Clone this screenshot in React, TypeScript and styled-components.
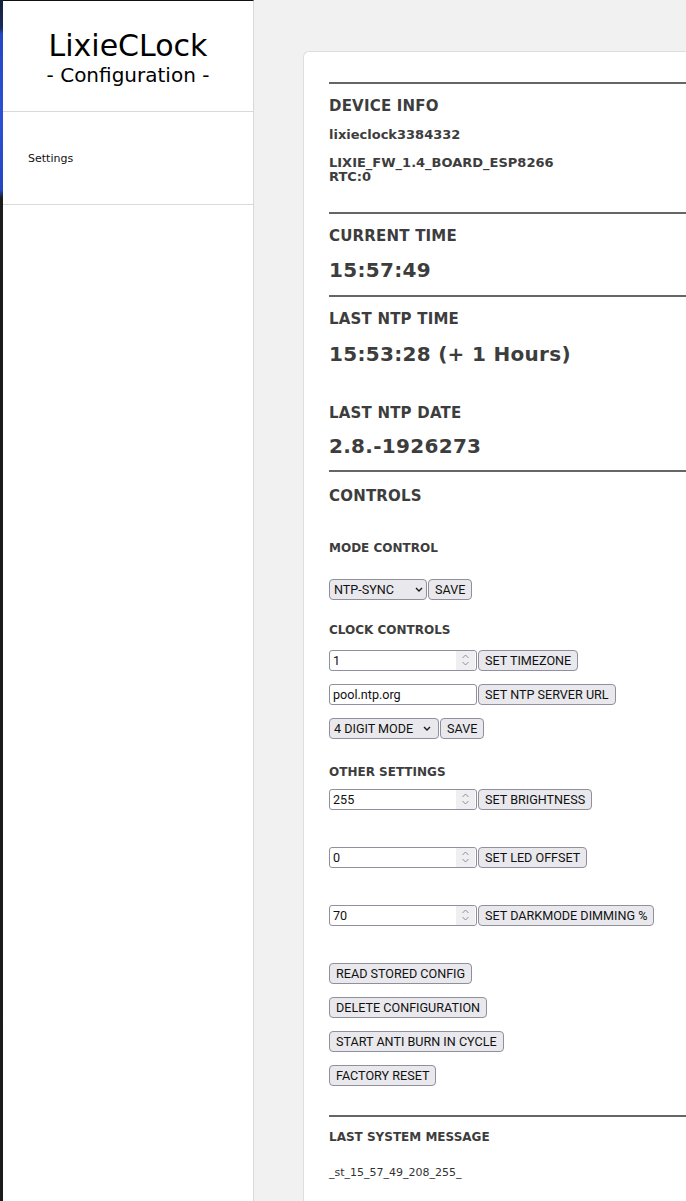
import React from "react";
import styled, { createGlobalStyle } from "styled-components";

const GlobalStyle = createGlobalStyle`
  html, body {
    margin: 0;
    padding: 0;
    overflow: hidden;
    background: #f1f1f1;
    font-family: "DejaVu Sans", Verdana, sans-serif;
  }
`;

const Page = styled.div`
  display: flex;
  min-height: 100vh;
  width: 100%;
`;

const DesktopEdge = styled.div`
  flex: 0 0 3px;
  background: linear-gradient(
    to bottom,
    #16203a 0px,
    #1a2a5c 28px,
    #2447c8 34px,
    #2b50d6 120px,
    #2546c4 190px,
    #1c1c1c 198px,
    #1b1b1b 100%
  );
`;

const Sidebar = styled.aside`
  flex: 0 0 250px;
  background: #ffffff;
  border-top: 1px solid #111;
  border-right: 1px solid #d9d9d9;
`;

const SidebarHeader = styled.header`
  padding: 28px 0 24px;
  border-bottom: 1px solid #d9d9d9;
  text-align: center;
  color: #000;
`;

const AppTitle = styled.div`
  font-size: 30px;
  line-height: 34px;
`;

const AppSubtitle = styled.div`
  font-size: 20px;
  line-height: 24px;
`;

const NavItem = styled.div`
  padding: 40px 0 39px 25px;
  border-bottom: 1px solid #d9d9d9;
  font-size: 11px;
  line-height: 13px;
  color: #111;
`;

const Main = styled.main`
  flex: 1 1 auto;
  min-width: 0;
  overflow: hidden;
  background: #f1f1f1;
  padding: 51px 0 0 49px;
`;

const Card = styled.section`
  width: 700px;
  min-height: 1200px;
  box-sizing: border-box;
  background: #ffffff;
  border: 1px solid #dedede;
  border-right: none;
  border-radius: 6px 0 0 0;
  padding: 30px 0 0 25px;
  color: #3d3d3d;
`;

const Rule = styled.hr<{ $mt?: number }>`
  margin: ${(p) => p.$mt ?? 0}px 0 0;
  border: none;
  border-top: 2px solid #666;
  height: 0;
`;

const SectionTitle = styled.h2<{ $mt: number }>`
  margin: ${(p) => p.$mt}px 0 0;
  font-size: 15px;
  line-height: 18px;
  font-weight: bold;
  letter-spacing: 0.2px;
`;

const InfoLine = styled.div<{ $mt: number }>`
  margin-top: ${(p) => p.$mt}px;
  font-size: 13px;
  line-height: 14px;
  font-weight: bold;
`;

const BigValue = styled.div<{ $mt: number }>`
  margin-top: ${(p) => p.$mt}px;
  font-size: 20px;
  line-height: 24px;
  font-weight: bold;
  letter-spacing: 0.3px;
`;

const SubTitle = styled.h3<{ $mt: number }>`
  margin: ${(p) => p.$mt}px 0 0;
  font-size: 12px;
  line-height: 14px;
  font-weight: bold;
`;

const ControlRow = styled.div<{ $mt: number }>`
  margin-top: ${(p) => p.$mt}px;
  display: flex;
  align-items: center;
  gap: 1px;
  height: 21px;
`;

const controlFont = `
  font-family: Roboto, "Liberation Sans", Arial, sans-serif;
  font-size: 12.6px;
  color: #111;
`;

const SelectWrap = styled.div`
  position: relative;
  display: inline-flex;
`;

const Select = styled.select<{ $w: number }>`
  ${controlFont}
  appearance: none;
  -webkit-appearance: none;
  box-sizing: border-box;
  width: ${(p) => p.$w}px;
  height: 21px;
  padding: 0 16px 0 4px;
  margin: 0;
  background: #e9e9ed;
  border: 1px solid #8f8f9d;
  border-radius: 4px;
  outline: none;
`;

const SelectArrow = styled.svg<{ $right: number }>`
  position: absolute;
  top: 8px;
  right: ${(p) => p.$right}px;
  pointer-events: none;
`;

const NumberField = styled.div`
  box-sizing: border-box;
  width: 148px;
  height: 21px;
  display: flex;
  align-items: stretch;
  background: #fff;
  border: 1px solid #8f8f9d;
  border-radius: 3px;
`;

const FieldInput = styled.input`
  ${controlFont}
  flex: 1 1 auto;
  min-width: 0;
  border: none;
  outline: none;
  background: transparent;
  padding: 0 0 0 3px;
  margin: 0;
`;

const Spinner = styled.div`
  flex: 0 0 19px;
  margin: 0 1px 0 0;
  background: #efeff2;
  display: flex;
`;

const TextField = styled.input`
  ${controlFont}
  box-sizing: border-box;
  width: 148px;
  height: 21px;
  margin: 0;
  padding: 0 3px;
  background: #fff;
  border: 1px solid #8f8f9d;
  border-radius: 3px;
  outline: none;
`;

const Button = styled.button`
  ${controlFont}
  box-sizing: border-box;
  height: 21px;
  margin: 0;
  padding: 0 6px;
  line-height: 19px;
  background: #e9e9ed;
  border: 1px solid #8f8f9d;
  border-radius: 4px;
  white-space: nowrap;
`;

const ButtonStack = styled.div<{ $mt: number }>`
  margin-top: ${(p) => p.$mt}px;
  display: flex;
  flex-direction: column;
  align-items: flex-start;
  gap: 13px;
`;

const Message = styled.div<{ $mt: number }>`
  margin-top: ${(p) => p.$mt}px;
  font-size: 11px;
  line-height: 13px;
  color: #333;
`;

function Dropdown({ width, arrowRight, options }: { width: number; arrowRight: number; options: string[] }) {
  return (
    <SelectWrap>
      <Select $w={width} defaultValue={options[0]}>
        {options.map((o) => (
          <option key={o}>{o}</option>
        ))}
      </Select>
      <SelectArrow $right={arrowRight} width="8" height="5" viewBox="0 0 8 5">
        <path d="M1 1 L4 4 L7 1" fill="none" stroke="#1a1a1a" strokeWidth="1.4" />
      </SelectArrow>
    </SelectWrap>
  );
}

function NumberInput({ value }: { value: string }) {
  return (
    <NumberField>
      <FieldInput type="text" defaultValue={value} />
      <Spinner>
        <svg width="19" height="19" viewBox="0 0 19 19">
          <path d="M6.5 7 L9.5 4 L12.5 7" fill="none" stroke="#8f8f9d" strokeWidth="1" />
          <path d="M6.5 11 L9.5 14 L12.5 11" fill="none" stroke="#8f8f9d" strokeWidth="1" />
        </svg>
      </Spinner>
    </NumberField>
  );
}

export default function App() {
  return (
    <>
      <GlobalStyle />
      <Page>
        <DesktopEdge />
        <Sidebar>
          <SidebarHeader>
            <AppTitle>LixieCLock</AppTitle>
            <AppSubtitle>- Configuration -</AppSubtitle>
          </SidebarHeader>
          <NavItem>Settings</NavItem>
        </Sidebar>
        <Main>
          <Card>
            <Rule />
            <SectionTitle $mt={13}>DEVICE INFO</SectionTitle>
            <InfoLine $mt={13}>lixieclock3384332</InfoLine>
            <InfoLine $mt={14}>
              LIXIE_FW_1.4_BOARD_ESP8266
              <br />
              RTC:0
            </InfoLine>
            <Rule $mt={28} />
            <SectionTitle $mt={13}>CURRENT TIME</SectionTitle>
            <BigValue $mt={13}>15:57:49</BigValue>
            <Rule $mt={13} />
            <SectionTitle $mt={13}>LAST NTP TIME</SectionTitle>
            <BigValue $mt={14}>15:53:28 (+ 1 Hours)</BigValue>
            <SectionTitle $mt={38}>LAST NTP DATE</SectionTitle>
            <BigValue $mt={12}>2.8.-1926273</BigValue>
            <Rule $mt={12} />
            <SectionTitle $mt={15}>CONTROLS</SectionTitle>

            <SubTitle $mt={36}>MODE CONTROL</SubTitle>
            <ControlRow $mt={24}>
              <Dropdown width={98} arrowRight={4} options={["NTP-SYNC"]} />
              <Button>SAVE</Button>
            </ControlRow>

            <SubTitle $mt={23}>CLOCK CONTROLS</SubTitle>
            <ControlRow $mt={13}>
              <NumberInput value="1" />
              <Button>SET TIMEZONE</Button>
            </ControlRow>
            <ControlRow $mt={13}>
              <TextField type="text" defaultValue="pool.ntp.org" />
              <Button>SET NTP SERVER URL</Button>
            </ControlRow>
            <ControlRow $mt={13}>
              <Dropdown width={110} arrowRight={8} options={["4 DIGIT MODE"]} />
              <Button>SAVE</Button>
            </ControlRow>

            <SubTitle $mt={26}>OTHER SETTINGS</SubTitle>
            <ControlRow $mt={10}>
              <NumberInput value="255" />
              <Button>SET BRIGHTNESS</Button>
            </ControlRow>
            <ControlRow $mt={37}>
              <NumberInput value="0" />
              <Button>SET LED OFFSET</Button>
            </ControlRow>
            <ControlRow $mt={37}>
              <NumberInput value="70" />
              <Button>SET DARKMODE DIMMING %</Button>
            </ControlRow>

            <ButtonStack $mt={37}>
              <Button>READ STORED CONFIG</Button>
              <Button>DELETE CONFIGURATION</Button>
              <Button>START ANTI BURN IN CYCLE</Button>
              <Button>FACTORY RESET</Button>
            </ButtonStack>

            <Rule $mt={29} />
            <SubTitle $mt={13}>LAST SYSTEM MESSAGE</SubTitle>
            <Message $mt={22}>_st_15_57_49_208_255_</Message>
          </Card>
        </Main>
      </Page>
    </>
  );
}
